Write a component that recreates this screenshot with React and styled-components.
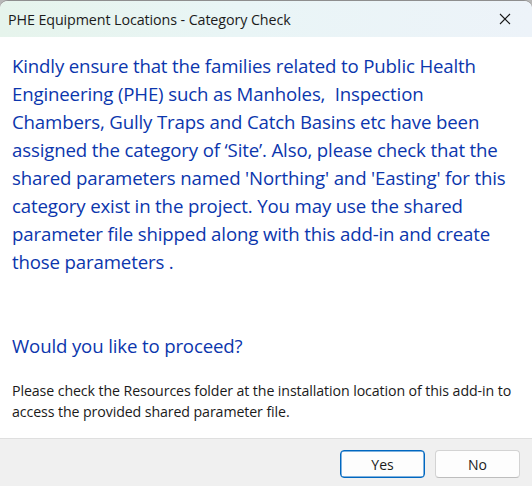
import React from "react";
import styled, { createGlobalStyle } from "styled-components";

const Global = createGlobalStyle`
  html, body { margin: 0; padding: 0; background: #b8b8b8; }
  body { font-family: "Open Sans", "Noto Sans", sans-serif; }
  #root { width: 532px; height: 486px; }
`;

const Window = styled.div`
  width: 532px;
  height: 486px;
  box-sizing: border-box;
  display: flex;
  flex-direction: column;
  border-radius: 8px 8px 0 0;
  border-top: 1px solid #8e8e8e;
  overflow: hidden;
  background: #ffffff;
`;

const TitleBar = styled.div`
  height: 36px;
  flex: none;
  display: flex;
  align-items: center;
  justify-content: space-between;
  padding: 0 8px 0 8px;
  background: linear-gradient(90deg, #e6f4ec 0%, #e9f5f6 45%, #edf3f9 100%);
`;

const Title = styled.div`
  font-size: 14.3px;
  color: #1b1b1b;
  letter-spacing: -0.1px;
  padding-top: 1px;
`;

const Close = styled.div`
  width: 30px;
  height: 30px;
  display: flex;
  align-items: center;
  justify-content: center;
  margin-right: 4px;
`;

const Body = styled.div`
  flex: 1;
  display: flex;
  flex-direction: column;
  padding: 15px 12px 0 12px;
`;

const Instruction = styled.div`
  font-size: 18.65px;
  line-height: 28px;
  color: #0b36ad;
  white-space: pre;
  letter-spacing: -0.15px;
  margin-top: ${p => p.$top || 0}px;
`;

const Note = styled.div`
  font-size: 14.2px;
  line-height: 21px;
  color: #1a1a1a;
  white-space: pre;
  letter-spacing: -0.1px;
  margin-top: 20px;
`;

const Footer = styled.div`
  height: 48px;
  flex: none;
  box-sizing: border-box;
  border-top: 1px solid #dfdfdf;
  background: #f0f0f0;
  display: flex;
  justify-content: flex-end;
  align-items: flex-start;
  gap: 10px;
  padding: 11px 12px 0 0;
`;

const Button = styled.button`
  width: 85px;
  height: 28px;
  box-sizing: border-box;
  border-radius: 4px;
  background: #fdfdfd;
  font-family: "Open Sans", "Noto Sans", sans-serif;
  font-size: 14px;
  color: #1b1b1b;
  padding: 0;
  border: 1px solid ${p => (p.$focus ? "#0067c0" : "#d3d3d3")};
  border-bottom-color: ${p => (p.$focus ? "#0067c0" : "#bdbdbd")};
  box-shadow: ${p => (p.$focus ? "inset 0 0 0 0.5px #0067c0" : "none")};
`;

const mainLines = [
  "Kindly ensure that the families related to Public Health",
  "Engineering (PHE) such as Manholes,  Inspection",
  "Chambers, Gully Traps and Catch Basins etc have been",
  "assigned the category of \u2018Site\u2019. Also, please check that the",
  "shared parameters named 'Northing' and 'Easting' for this",
  "category exist in the project. You may use the shared",
  "parameter file shipped along with this add-in and create",
  "those parameters .",
];

export default function App() {
  return (
    <>
      <Global />
      <Window>
        <TitleBar>
          <Title>PHE Equipment Locations - Category Check</Title>
          <Close>
            <svg width="12" height="12" viewBox="0 0 12 12">
              <path d="M1 1L11 11M11 1L1 11" stroke="#1b1b1b" strokeWidth="1.1" fill="none" />
            </svg>
          </Close>
        </TitleBar>
        <Body>
          <Instruction>{mainLines.join("\n")}</Instruction>
          <Instruction $top={56}>Would you like to proceed?</Instruction>
          <Note>
            {"Please check the Resources folder at the installation location of this add-in to\naccess the provided shared parameter file."}
          </Note>
        </Body>
        <Footer>
          <Button $focus>Yes</Button>
          <Button>No</Button>
        </Footer>
      </Window>
    </>
  );
}
